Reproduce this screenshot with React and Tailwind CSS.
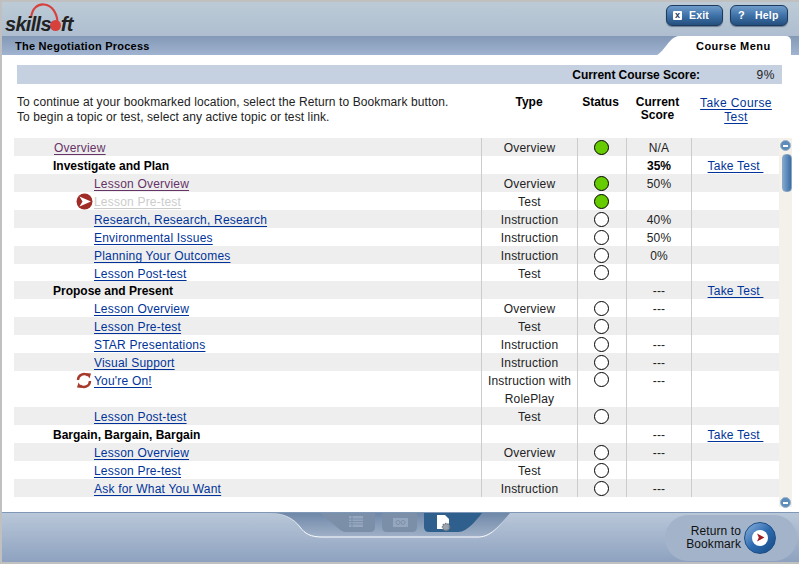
const BLUE = "text-[#003399]";
const rows = [
  { h: "h-[18px]", name: "Overview", lv: 1, tone: "visited", type: "Overview", st: "g", score: "N/A" },
  { h: "h-[18px]", name: "Investigate and Plan", lv: 0, score: "35%", test: true },
  { h: "h-[18px]", name: "Lesson Overview", lv: 2, tone: "visited", type: "Overview", st: "g", score: "50%" },
  { h: "h-[18px]", name: "Lesson Pre-test", lv: 2, tone: "off", type: "Test", st: "g", icon: "arrow" },
  { h: "h-[18px]", name: "Research, Research, Research", lv: 2, type: "Instruction", st: "w", score: "40%" },
  { h: "h-[18px]", name: "Environmental Issues", lv: 2, type: "Instruction", st: "w", score: "50%" },
  { h: "h-[18px]", name: "Planning Your Outcomes", lv: 2, type: "Instruction", st: "w", score: "0%" },
  { h: "h-[17px]", name: "Lesson Post-test", lv: 2, type: "Test", st: "w" },
  { h: "h-[18px]", name: "Propose and Present", lv: 0, score: "---", test: true },
  { h: "h-[18px]", name: "Lesson Overview", lv: 2, type: "Overview", st: "w", score: "---" },
  { h: "h-[18px]", name: "Lesson Pre-test", lv: 2, type: "Test", st: "w" },
  { h: "h-[18px]", name: "STAR Presentations", lv: 2, type: "Instruction", st: "w", score: "---" },
  { h: "h-[18px]", name: "Visual Support", lv: 2, type: "Instruction", st: "w", score: "---" },
  { h: "h-[36px]", name: "You're On!", lv: 2, type: "Instruction with RolePlay", st: "w", score: "---", icon: "loop", top: true },
  { h: "h-[18px]", name: "Lesson Post-test", lv: 2, type: "Test", st: "w" },
  { h: "h-[18px]", name: "Bargain, Bargain, Bargain", lv: 0, score: "---", test: true },
  { h: "h-[18px]", name: "Lesson Overview", lv: 2, type: "Overview", st: "w", score: "---" },
  { h: "h-[18px]", name: "Lesson Pre-test", lv: 2, type: "Test", st: "w" },
  { h: "h-[18px]", name: "Ask for What You Want", lv: 2, type: "Instruction", st: "w", score: "---" },
];

function Arrow() {
  return (
    <svg width="17" height="17" viewBox="0 0 17 17" className="block">
      <circle cx="8.5" cy="8.5" r="8" fill="#a02c28" />
      <path d="M3.5 3.5 L15 8.5 L3.5 13.5 L6.5 8.5 Z" fill="#fff" />
    </svg>
  );
}
function Loop() {
  return (
    <svg width="16" height="17" viewBox="0 0 16 17" className="block" fill="none" stroke="#a63a2c" strokeWidth="2.4">
      <path d="M2 8 A6 6 0 0 1 12 3.6" />
      <path d="M14 9 A6 6 0 0 1 4 13.4" />
      <path d="M10 1 L15 1.5 L13.5 6.5 Z" fill="#a63a2c" stroke="none" />
      <path d="M6 16 L1 15.5 L2.5 10.5 Z" fill="#a63a2c" stroke="none" />
    </svg>
  );
}
function Dot({ kind }) {
  return <span className={`block w-[15px] h-[15px] rounded-full border border-black ${kind === "g" ? "bg-[#66cc00]" : "bg-white"}`} />;
}

function Row({ r, i }) {
  const bg = i % 2 === 0 ? "bg-[#eeeeee]" : "bg-white";
  const pad = r.lv === 0 ? "pl-[39px]" : r.lv === 1 ? "pl-[40px]" : "pl-[80px]";
  const tone = r.tone === "visited" ? "text-[#663366]" : r.tone === "off" ? "text-[#cccccc]" : BLUE;
  return (
    <div className={`flex ${r.h} ${bg} text-[12px] leading-[18px] text-[#222] tracking-[0.2px]`}>
      <div className={`relative w-[467px] flex items-start pt-px ${pad}`}>
        {r.icon && (
          <span className="absolute left-[62px] top-0 h-[18px] flex items-center">
            {r.icon === "arrow" ? <Arrow /> : <Loop />}
          </span>
        )}
        {r.lv === 0 ? (
          <span className="font-bold text-black tracking-normal">{r.name}</span>
        ) : (
          <a className={`${tone} underline underline-offset-2`}>{r.name}</a>
        )}
      </div>
      <div className="w-[96px] flex items-start pt-px justify-center border-l border-[#cccccc] text-center">
        <span>{r.type}</span>
      </div>
      <div className={`w-[49px] flex ${r.top ? "items-start pt-px" : "items-center"} justify-center pr-[2px] border-l border-[#cccccc]`}>
        {r.st && <Dot kind={r.st} />}
      </div>
      <div className={`w-[65px] flex items-start pt-px justify-center border-l border-[#cccccc] ${r.lv === 0 && r.score !== "---" ? "font-bold text-black tracking-normal" : ""}`}>
        {r.score}
      </div>
      <div className="w-[88px] flex items-start pt-px justify-center border-l border-[#cccccc]">
        {r.test && <a className={`${BLUE} underline underline-offset-2 whitespace-pre`}>Take Test </a>}
      </div>
    </div>
  );
}

function Logo() {
  return (
    <div className="relative h-[34px] w-[75px]">
      <svg width="75" height="34" viewBox="0 0 75 34" className="absolute left-0 top-0">
        <path d="M26 16 C27 6 33 2 39 2.5 C47 3 52 11 52.5 20" fill="none" stroke="#d8403c" strokeWidth="2.2" />
        <circle cx="50.5" cy="23.5" r="5.5" fill="#d8403c" />
      </svg>
      <div className="absolute left-0 top-[11px] flex font-bold italic text-[20px] leading-[22px] tracking-[-0.7px] text-[#222222] font-['Liberation_Sans',sans-serif]">
        <span>skills</span>
        <span className="w-[10px]" />
        <span>ft</span>
      </div>
    </div>
  );
}

function HeadBtn({ children, label, w, gap }) {
  return (
    <button className={`${w} h-[21px] flex items-center rounded-[6px] border border-[#1d3a5c] bg-gradient-to-b from-[#6f9ccb] via-[#3f72a8] to-[#24507f] shadow-[0_1px_1px_#6a7a90] text-white text-[10.5px] font-bold tracking-[0.2px]`}>
      <span className="w-[17px] flex justify-center ml-[2px]">{children}</span>
      <span className={gap}>{label}</span>
    </button>
  );
}

function Dock() {
  const edge = "M0 0 C14 0 24 6 30 14 C35 21 41 24 52 24 L208 24 C218 24 226 18 240 0";
  return (
    <svg width="240" height="29" viewBox="0 0 240 29" className="block">
      <defs>
        <linearGradient id="dockFill" x1="0" y1="0" x2="0" y2="1">
          <stop offset="0" stopColor="#6f88a8" />
          <stop offset="1" stopColor="#a0b1c8" />
        </linearGradient>
        <linearGradient id="dockEdge" x1="0" y1="0" x2="1" y2="0">
          <stop offset="0" stopColor="#ffffff" stopOpacity="0" />
          <stop offset="0.15" stopColor="#ffffff" />
          <stop offset="0.92" stopColor="#ffffff" />
          <stop offset="1" stopColor="#ffffff" stopOpacity="0" />
        </linearGradient>
      </defs>
      <path d={`${edge} Z`} fill="url(#dockFill)" />
      <path d={edge} fill="none" stroke="url(#dockEdge)" strokeWidth="1" />
      <path d="M50 0 H105 V14 Q105 19 100 19 H76 Q72 19 68 15 Z" fill="#7c8fa9" />
      <path d="M112 2 Q112 0 114 0 H147 V14 Q147 19 142 19 H117 Q112 19 112 14 Z" fill="#7c8fa9" />
      <path d="M154 0 H212 C206 8 200 14 195 17 Q192 19 188 19 H159 Q154 19 154 14 Z" fill="#2f5f8c" />
      <g fill="#95a7bf">
        <rect x="79" y="3" width="14" height="11" />
        <rect x="123" y="5" width="15" height="9" />
      </g>
      <path d="M79 6 H93 M79 8.5 H93 M79 11 H93 M82 3 V14" stroke="#7c8fa9" strokeWidth="1" />
      <circle cx="128" cy="9.5" r="2" fill="none" stroke="#7c8fa9" strokeWidth="1" />
      <circle cx="133" cy="9.5" r="2" fill="none" stroke="#7c8fa9" strokeWidth="1" />
      <path d="M167 2 H175 L179 6 V16 H167 Z" fill="#ffffff" />
      <circle cx="176" cy="14" r="3.5" fill="#9aa3ad" stroke="#6f7a86" strokeWidth="1.5" strokeDasharray="1.5 1" />
    </svg>
  );
}

export default function App() {
  return (
    <div className="w-[799px] h-[564px] overflow-hidden bg-[#c0c0c0] pt-[2px] pl-[2px] flex flex-col font-['Liberation_Sans',Arial,sans-serif]">
      <header className="h-[53px] shrink-0 flex flex-col bg-gradient-to-b from-[#bccbd6] to-[#a6b7cd]">
        <div className="h-[34px] flex items-start justify-between pl-[3px] pr-[11px]">
          <Logo />
          <div className="flex gap-[7px] pt-[3px]">
            <HeadBtn w="w-[57px]" label="Exit" gap="ml-[3px]">
              <span className="w-[9px] h-[9px] bg-white rounded-[1px] text-[#1d3a5c] text-[9px] leading-[9px] flex items-center justify-center font-bold">x</span>
            </HeadBtn>
            <HeadBtn w="w-[58px]" label="Help" gap="ml-[5px]">
              <span className="text-[11px] leading-none">?</span>
            </HeadBtn>
          </div>
        </div>
        <div className="h-[19px] flex bg-gradient-to-b from-[#8399b6] to-[#a0b3d0]">
          <div className="flex-1 pl-[13px] pt-px text-[11px] leading-[19px] font-bold text-black tracking-[0.25px]">The Negotiation Process</div>
          <div className="flex h-[19px]">
            <svg width="22" height="19" viewBox="0 0 22 19" className="block">
              <path d="M0 19 C8 15 12 1 22 0 V19 Z" fill="#ffffff" />
            </svg>
            <div className="w-[112px] bg-white rounded-tr-[5px] text-[11px] leading-[21px] font-bold text-black tracking-[0.45px] pl-[17px]">Course Menu</div>
          </div>
          <div className="w-[8px]" />
        </div>
      </header>

      <main className="h-[457px] shrink-0 bg-white flex flex-col">
        <div className="ml-[15px] mt-[10px] w-[765px] h-[19px] bg-[#c5d0e0] flex items-center justify-end pt-px text-[12px] text-black">
          <span className="font-bold tracking-[-0.05px]">Current Course Score:</span>
          <span className="w-[82px] pr-[7px] text-right tracking-[0.6px] text-[#222]">9%</span>
        </div>
        <div className="flex h-[54px] ml-[15px] pt-[11px] text-[12px] leading-[15px] text-[#222]">
          <div className="w-[465px] tracking-[0.1px]">
            <p>To continue at your bookmarked location, select the Return to Bookmark button.</p>
            <p>To begin a topic or test, select any active topic or test link.</p>
          </div>
          <div className="w-[94px] text-center font-bold text-black">Type</div>
          <div className="w-[49px] text-center font-bold text-black">Status</div>
          <div className="w-[65px] text-center font-bold text-black leading-[13px] pt-px">Current<br />Score</div>
          <div className="w-[92px] text-center tracking-[0.4px] pt-px leading-[14px]">
            <a className={`${BLUE} underline underline-offset-2`}>Take Course<br />Test</a>
          </div>
        </div>
        <div className="flex ml-[12px]">
          <div className="w-[765px]">
            {rows.map((r, i) => <Row key={i} r={r} i={i} />)}
          </div>
          <div className="w-[13px] h-[369px] bg-[#f4f1ea] flex flex-col items-center relative">
            <span className="mt-[2px] w-[11px] h-[11px] rounded-full bg-[#5c8cba] border border-[#9bb4cd] flex items-center justify-center">
              <span className="w-[5px] h-[2px] bg-white" />
            </span>
            <span className="mt-[3px] ml-[3px] w-[10px] h-[38px] rounded-[4px] bg-gradient-to-r from-[#7ea6cf] to-[#3b6ea3] border border-[#8aa6c2]" />
            <span className="absolute bottom-[-1px] w-[11px] h-[11px] rounded-full bg-[#5c8cba] border border-[#9bb4cd] flex items-center justify-center">
              <span className="w-[5px] h-[2px] bg-white" />
            </span>
          </div>
        </div>
      </main>

      <footer className="h-[50px] shrink-0 relative bg-gradient-to-b from-[#b9c7d8] to-[#8ea2c0] border-t border-[#7f98b7] flex justify-end items-center pr-[2px]">
        <div className="absolute left-[268px] top-0"><Dock /></div>
        <div className="w-[132px] h-[46px] rounded-l-[24px] rounded-r-[24px] bg-[#a3b4ca] flex items-center justify-end pr-[21px] gap-[3px]">
          <div className="text-[12px] leading-[13px] text-right text-[#111] tracking-[0.1px]">Return to<br />Bookmark</div>
          <span className="w-[32px] h-[32px] rounded-full bg-gradient-to-br from-[#8db4de] via-[#2d6bb0] to-[#174b85] border border-[#1e4f86] flex items-center justify-center">
            <span className="w-[16px] h-[16px] rounded-full bg-white flex items-center justify-center">
              <svg width="9" height="9" viewBox="0 0 9 9"><path d="M1 0.5 L8.5 4.5 L1 8.5 L2.8 4.5 Z" fill="#a01c20" /></svg>
            </span>
          </span>
        </div>
      </footer>
    </div>
  );
}
